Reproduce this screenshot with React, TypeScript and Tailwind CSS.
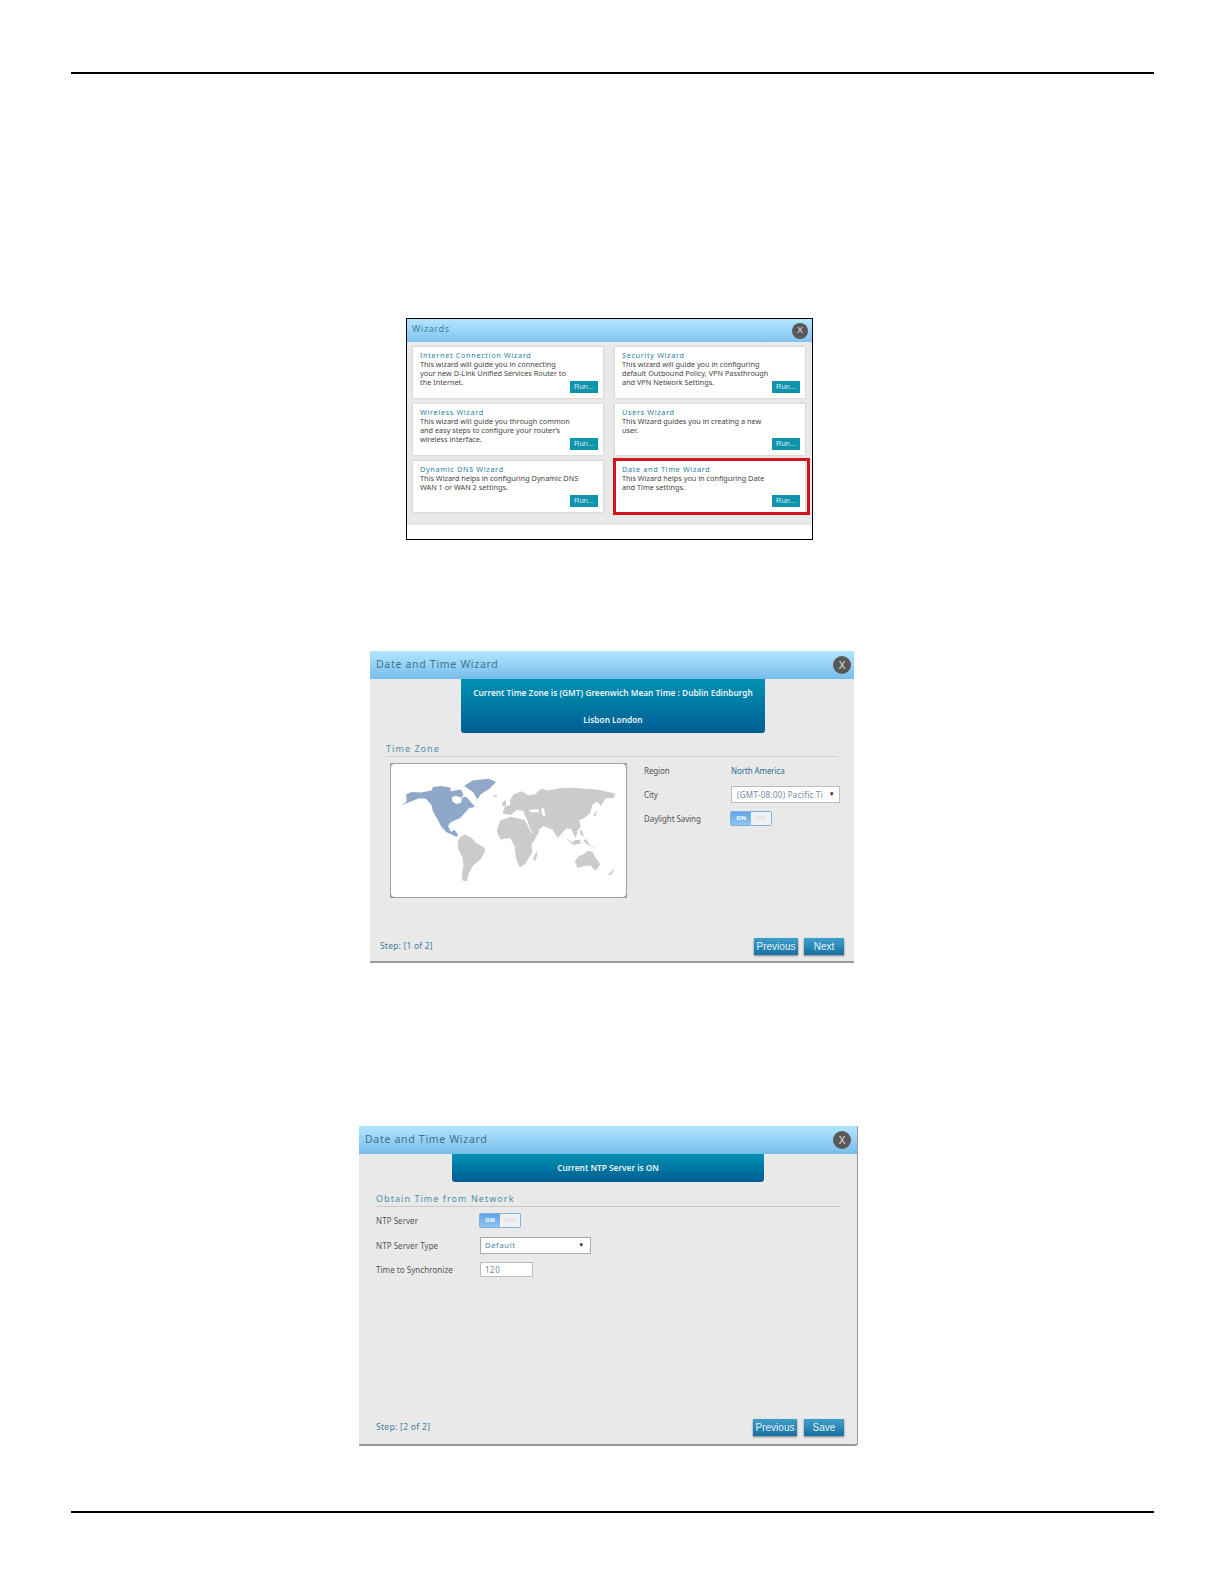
import React from 'react';

const FONT = "font-['Noto_Sans',sans-serif]";

function CloseButton({ small }: { small?: boolean }) {
  return (
    <div
      className={
        small
          ? "flex h-[16px] w-[16px] items-center justify-center rounded-full bg-[#585858] font-['Liberation_Sans',sans-serif] text-[9px] text-[#e0e0e0]"
          : "flex h-[18px] w-[18px] items-center justify-center rounded-full bg-[#585858] font-['Liberation_Sans',sans-serif] text-[10px] text-[#e0e0e0]"
      }
    >
      X
    </div>
  );
}

function WizardCard({ title, lines, boxed }: { title: string; lines: string[]; boxed?: boolean }) {
  return (
    <div className="relative h-[51px] w-[190px] bg-white pl-[7px] pt-[4px] shadow-[0_0_2px_rgba(0,0,0,0.2)]">
      <div className="text-[7.3px] leading-[9px] tracking-[0.65px] text-[#2a7f9f]">{title}</div>
      {lines.map((l) => (
        <div key={l} className="text-[7.3px] leading-[9px] text-[#444]">
          {l}
        </div>
      ))}
      <div className="absolute bottom-[5px] right-[5px] flex h-[12px] w-[28px] items-center justify-center bg-[#0f93ab] font-['Liberation_Sans',sans-serif] text-[7.5px] text-[#d5eef3]">
        Run...
      </div>
      {/* red highlight drawn over the card */}
      {boxed && <div className="absolute -bottom-[3px] -left-[2px] -right-[5px] -top-[3px] border-[3px] border-[#d2141f]" />}
    </div>
  );
}

function WizardsPanel() {
  return (
    <div className={`ml-[406px] h-[222px] w-[407px] border border-black bg-white ${FONT}`}>
      <div className="flex h-[23px] items-center justify-between bg-gradient-to-b from-[#b5e6ff] to-[#7fc3ef] pl-[5px] pr-[4px]">
        <span className="-mt-[3px] text-[9px] tracking-[0.6px] text-[#3f7f9f]">Wizards</span>
        <CloseButton small />
      </div>
      <div className="grid h-[183px] grid-cols-[190px_190px] content-start gap-x-[12px] gap-y-[6px] bg-[#e9e9e9] pl-[6px] pt-[5px]">
        <WizardCard
          title="Internet Connection Wizard"
          lines={['This wizard will guide you in connecting', 'your new D-Link Unified Services Router to', 'the Internet.']}
        />
        <WizardCard
          title="Security Wizard"
          lines={['This wizard will guide you in configuring', 'default Outbound Policy, VPN Passthrough', 'and VPN Network Settings.']}
        />
        <WizardCard
          title="Wireless Wizard"
          lines={['This wizard will guide you through common', 'and easy steps to configure your router\u2019s', 'wireless interface.']}
        />
        <WizardCard title="Users Wizard" lines={['This Wizard guides you in creating a new', 'user.']} />
        <WizardCard
          title="Dynamic DNS Wizard"
          lines={['This Wizard helps in configuring Dynamic DNS', 'WAN 1 or WAN 2 settings.']}
        />
        <WizardCard
          boxed
          title="Date and Time Wizard"
          lines={['This Wizard helps you in configuring Date', 'and Time settings.']}
        />
      </div>
    </div>
  );
}

function Toggle() {
  return (
    <div className="flex h-[15px] w-[42px] rounded-[2px] border border-[#7fb2e0] bg-[#dfe7ee]">
      <div className="flex w-[20px] items-center justify-center bg-gradient-to-b from-[#5ea6e6] to-[#8fc4f2] text-[6px] font-bold text-white">
        ON
      </div>
      <div className="flex flex-1 items-center justify-center bg-[#f1f1f1] text-[6px] text-[#d5d5d5]">OFF</div>
    </div>
  );
}

function WizardButton({ label, width }: { label: string; width: string }) {
  return (
    <div
      className={`flex h-[17px] items-center justify-center bg-gradient-to-b from-[#3f9fcb] to-[#17709f] font-['Liberation_Sans',sans-serif] text-[10px] text-[#e6f2f8] shadow-[0_1px_2px_rgba(0,0,0,0.45)] ${width}`}
    >
      {label}
    </div>
  );
}

function DialogHeader({ wide }: { wide?: boolean }) {
  return (
    <div
      className={
        wide
          ? 'flex h-[28px] shrink-0 items-center justify-between bg-gradient-to-b from-[#b3e6ff] to-[#76bdeb] pl-[6px] pr-[6px]'
          : 'flex h-[28px] shrink-0 items-center justify-between bg-gradient-to-b from-[#b3e6ff] to-[#76bdeb] pl-[6px] pr-[3px]'
      }
    >
      <span className="text-[10.5px] tracking-[0.7px] text-[#3c7590]">Date and Time Wizard</span>
      <CloseButton />
    </div>
  );
}

// traced by eye from the reference, coordinates follow a 3x crop of the map
function WorldMap() {
  return (
    <svg viewBox="15 25 710 405" className="h-full w-full">
      <g fill="#8fa8c9">
        <path d="M45 150 L60 139 L58 118 L75 110 L105 112 L135 106 L140 95 L165 92 L195 97 L192 108 L225 103 L233 118 L226 128 L240 125 L250 135 L268 155 L250 160 L236 175 L222 190 L205 197 L191 205 L186 215 L195 232 L205 225 L216 240 L212 247 L200 241 L180 232 L165 215 L155 195 L140 170 L135 150 L118 130 L95 130 L70 141 Z" />
        <path d="M235 92 L260 75 L310 70 L332 80 L312 100 L285 118 L275 132 L262 110 Z" />
      </g>
      <path d="M197 127 L208 122 L228 128 L226 143 L212 147 L200 140 Z" fill="#fff" />
      <g fill="#cbcbcb">
        <path d="M215 262 L222 248 L238 240 L258 250 L270 265 L298 280 L298 292 L285 315 L262 335 L248 360 L244 382 L230 380 L228 362 L233 335 L230 310 L216 282 Z" />
        <path d="M334 228 L345 197 L375 186 L400 190 L420 196 L440 235 L466 226 L450 255 L440 270 L442 295 L420 330 L405 340 L393 315 L388 275 L375 250 L345 255 Z" />
        <path d="M375 135 L385 118 L410 108 L430 120 L450 118 L470 100 L490 106 L530 98 L575 97 L600 100 L640 103 L695 115 L690 128 L665 130 L652 152 L640 140 L625 150 L618 175 L600 190 L585 195 L590 215 L580 228 L575 250 L560 222 L545 222 L520 250 L505 225 L480 215 L460 212 L475 215 L445 238 L432 212 L425 190 L420 180 L415 167 L395 165 L376 180 L352 175 L358 155 L375 150 Z" />
        <path d="M572 320 L585 305 L600 300 L610 290 L625 292 L635 310 L650 330 L635 350 L620 335 L605 335 L580 342 Z" />
        <path d="M445 312 L455 292 L458 300 L451 322 Z" />
        <path d="M545 250 L572 268 L578 274 L565 270 Z" />
        <path d="M566 258 L588 256 L590 268 L572 270 Z" />
        <path d="M598 262 L640 286 L618 270 L604 252 Z" />
        <path d="M586 222 L596 232 L600 248 L590 240 Z" />
        <path d="M322 121 L336 118 L332 126 Z" />
        <path d="M350 142 L362 135 L363 152 L351 152 Z" />
        <path d="M672 362 L692 343 L684 362 Z" />
        <path d="M628 180 L640 165 L634 186 Z" />
      </g>
      <path d="M430 165 L460 162 L465 172 L440 172 Z" fill="#fff" />
      <path d="M470 160 L478 160 L482 185 L472 180 Z" fill="#fff" />
    </svg>
  );
}

function TimeZoneDialog() {
  return (
    <div className={`ml-[370px] flex h-[312px] w-[484px] flex-col border-b-2 border-[#9a9a9a] bg-[#e9e9e9] ${FONT}`}>
      <DialogHeader />
      <div className="ml-[91px] flex h-[54px] w-[304px] shrink-0 flex-col items-center rounded-b-[3px] bg-gradient-to-b from-[#0092b2] to-[#005e92] pt-[7px] text-[8.3px] font-semibold text-[#e8f4f8]">
        <div className="h-[27px] whitespace-nowrap leading-[14px]">Current Time Zone is (GMT) Greenwich Mean Time : Dublin Edinburgh</div>
        <div className="leading-[14px]">Lisbon London</div>
      </div>
      <div className="mx-[16px] mt-[10px] h-[14px] border-b border-[#d2d2d2] text-[9px] leading-[12px] tracking-[1.05px] text-[#4f8ea8]">
        Time Zone
      </div>
      <div className="mt-[6px] flex pl-[20px]">
        <div className="h-[135px] w-[237px] bg-[#a0a0a0] p-px">
          <div className="h-full w-full rounded-[4px] bg-white">
            <WorldMap />
          </div>
        </div>
        <div className="ml-[17px] flex w-[196px] flex-col text-[8px] tracking-[-0.1px] text-[#555]">
          <div className="flex h-[16px] items-center">
            <span className="w-[87px]">Region</span>
            <span className="text-[#2a6f8f]">North America</span>
          </div>
          <div className="mt-[7px] flex h-[17px] items-center">
            <span className="w-[87px]">City</span>
            <div className="flex h-[17px] w-[109px] items-center justify-between border border-[#bdbdbd] bg-white pl-[5px] pr-[4px] text-[8px] tracking-[0.3px] text-[#6f8a9c]">
              <span className="whitespace-nowrap">(GMT-08:00) Pacific Ti</span>
              <span className="text-[6px] text-[#222]">▼</span>
            </div>
          </div>
          <div className="mt-[8px] flex h-[15px] items-center">
            <span className="w-[86px]">Daylight Saving</span>
            <Toggle />
          </div>
        </div>
      </div>
      <div className="mt-auto mb-[6px] flex items-center justify-between pl-[10px] pr-[10px]">
        <span className="text-[8.5px] tracking-[0.2px] text-[#3f7f9f]">Step: [1 of 2]</span>
        <div className="flex gap-[6px]">
          <WizardButton label="Previous" width="w-[44px]" />
          <WizardButton label="Next" width="w-[40px]" />
        </div>
      </div>
    </div>
  );
}

function NtpDialog() {
  return (
    <div
      className={`ml-[359px] flex h-[320px] w-[499px] flex-col rounded-br-[3px] border-r border-b-2 border-[#9a9a9a] bg-[#e9e9e9] ${FONT}`}
    >
      <DialogHeader wide />
      <div className="ml-[93px] flex h-[28px] w-[312px] shrink-0 items-center justify-center rounded-b-[3px] bg-gradient-to-b from-[#0092b2] to-[#005e92] text-[8.3px] font-semibold text-[#e8f4f8]">
        Current NTP Server is ON
      </div>
      <div className="ml-[17px] mr-[17px] mt-[11px] h-[14px] border-b border-[#c9c9c9] text-[9px] leading-[12px] tracking-[1.05px] text-[#4f8ea8]">
        Obtain Time from Network
      </div>
      <div className="ml-[17px] mt-[6px] flex flex-col text-[8px] tracking-[0.05px] text-[#555]">
        <div className="flex h-[15px] items-center">
          <span className="w-[103px]">NTP Server</span>
          <Toggle />
        </div>
        <div className="mt-[9px] flex h-[17px] items-center">
          <span className="w-[104px]">NTP Server Type</span>
          <div className="flex h-[17px] w-[111px] items-center justify-between border border-[#aaa] bg-white pl-[4px] pr-[5px] text-[7.5px] tracking-[0.7px] text-[#3f7f9f]">
            <span>Default</span>
            <span className="text-[6px] text-[#222]">▼</span>
          </div>
        </div>
        <div className="mt-[8px] flex h-[15px] items-center">
          <span className="w-[104px]">Time to Synchronize</span>
          <div className="flex h-[15px] w-[53px] items-center border border-[#bdbdbd] bg-white pl-[4px] text-[8px] tracking-[0.5px] text-[#6f8a9c]">
            120
          </div>
        </div>
      </div>
      <div className="mt-auto mb-[8px] flex items-center justify-between pl-[17px] pr-[13px]">
        <span className="text-[8.5px] tracking-[0.3px] text-[#3f7f9f]">Step: [2 of 2]</span>
        <div className="flex gap-[7px]">
          <WizardButton label="Previous" width="w-[44px]" />
          <WizardButton label="Save" width="w-[40px]" />
        </div>
      </div>
    </div>
  );
}

export default function App() {
  return (
    <div className="h-[1585px] w-[1225px] overflow-hidden bg-white pt-[72px]">
      <div className="mx-[71px] h-[2px] bg-black" />
      <div className="mt-[244px]">
        <WizardsPanel />
      </div>
      <div className="mt-[111px]">
        <TimeZoneDialog />
      </div>
      <div className="mt-[163px]">
        <NtpDialog />
      </div>
      <div className="mx-[71px] mt-[65px] h-[2px] bg-black" />
    </div>
  );
}
